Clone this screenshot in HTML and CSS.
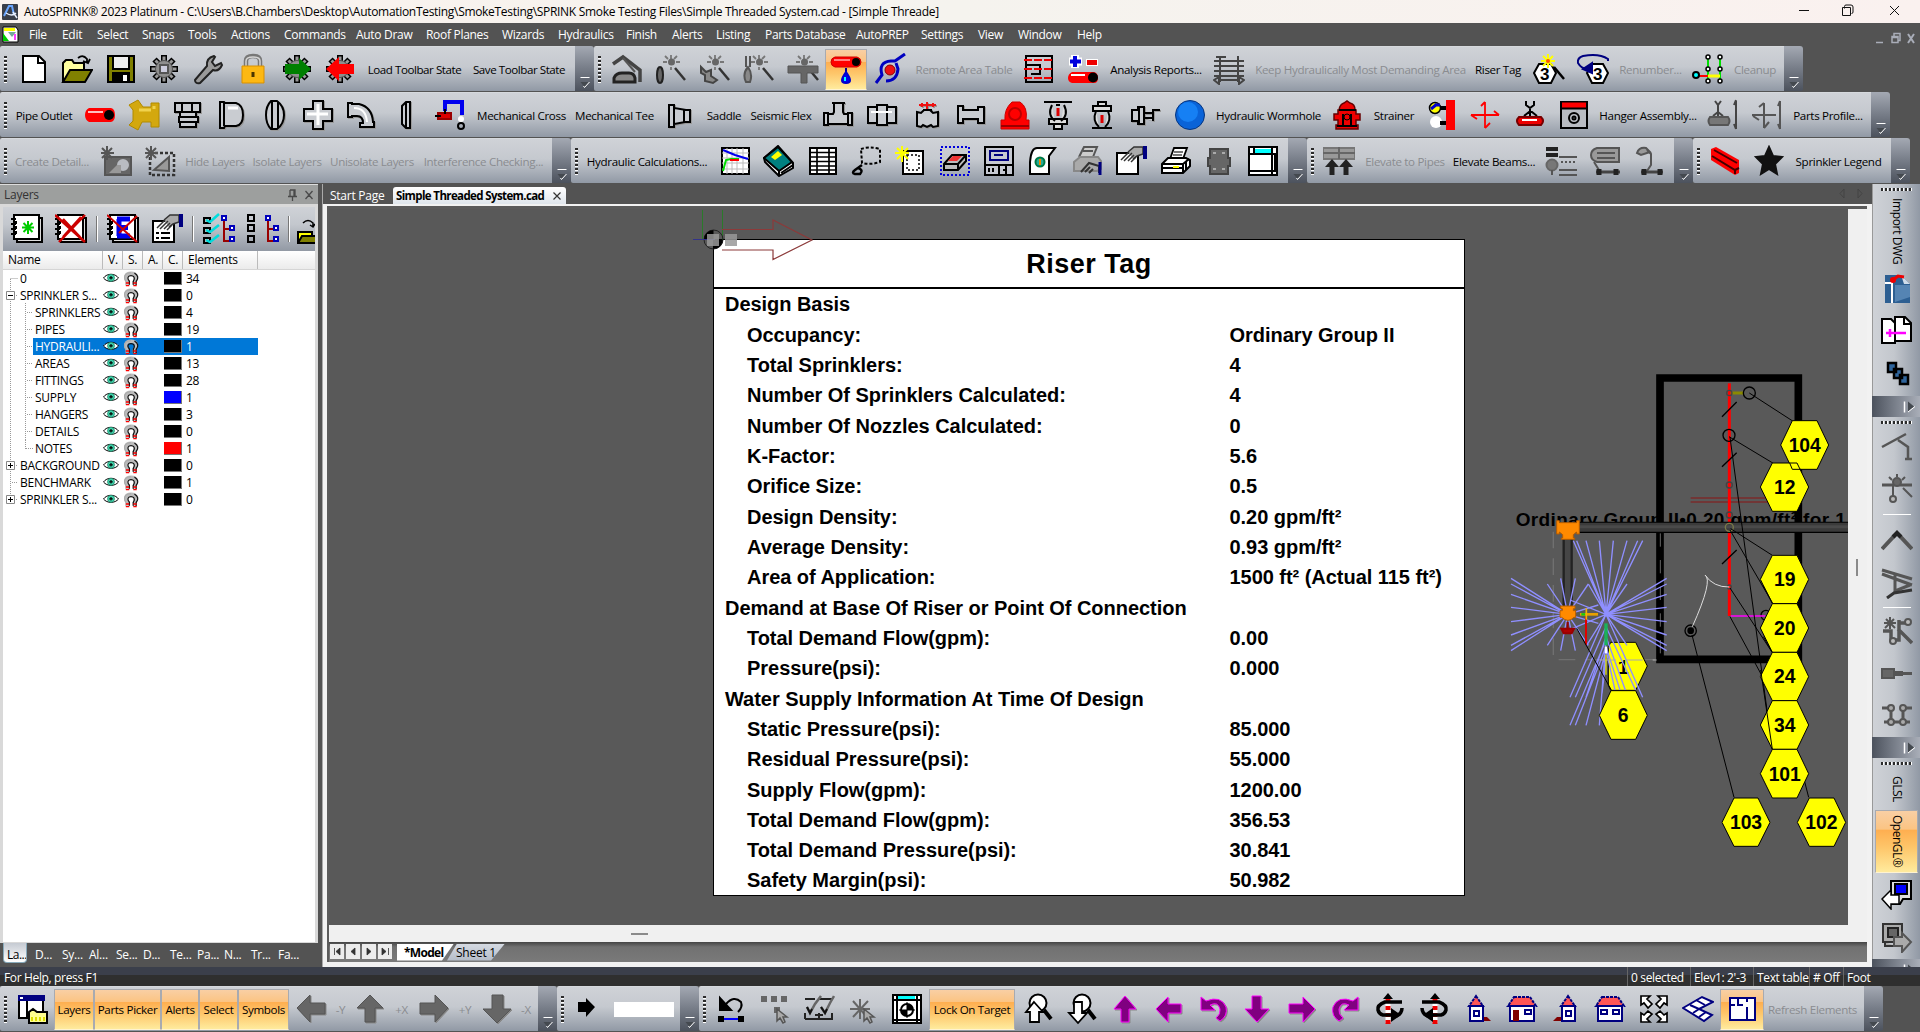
FILE: index.html
```html
<!DOCTYPE html>
<html lang="en">
<head>
<meta charset="utf-8">
<title>AutoSPRINK 2023 Platinum</title>
<link rel="stylesheet" href="styles.css">
</head>
<body>
<svg class="defs" width="0" height="0">
  <symbol id="eye" viewBox="0 0 16 12"><path d="M0.5 6C4 1 12 1 15.500 6C12 10.500 4 10.500 .5 6Z" fill="#fff" stroke="#000"/><circle cx="8" cy="5.800" r="3.400" fill="#3fd9b0" stroke="#2a9a7a"/><path d="M8 4v3.600M6.200 5.800h3.600" stroke="#000" stroke-width="1.200"/></symbol>
  <symbol id="magnet" viewBox="0 0 14 14"><path d="M4.200 12V9.500C1 6 2 2 7 2s6 4 2.800 7.500V12" fill="none" stroke="#bbb" stroke-width="3"/><path d="M2.600 12.500V9.200C-.2 5 2 1.500 7 1.500" fill="none" stroke="#aaa"/><path d="M5.600 12V9C3 6 4.500 4 7 4s4 2 2 5v3M10 1.800q5 3 1.500 7.400v3" fill="none" stroke="#111" stroke-width="1.100"/><path d="M2.500 10.500h3M9 10.500h3M2.500 12.800h3M9 12.800h3" stroke="#f00" stroke-width="1.200"/></symbol>
  <symbol id="cap" viewBox="0 0 18 45"><path d="M5 31.500h9" stroke="#fff"/><path d="M5 36h8l-4 5z" fill="#44494f"/><path d="M14 36l-5 5.500l-1-1.500" fill="none" stroke="#fff"/></symbol>
  <symbol id="cap-side" viewBox="0 0 48 20"><path d="M32.500 5v11" stroke="#fff" stroke-width="1.500"/><path d="M36 5v10l6-5z" fill="#44494f"/><path d="M36 15.500l7-5.500" stroke="#fff"/></symbol>
  <symbol id="gear" viewBox="0 0 32 32"><g stroke="#000" stroke-width="6"><path d="M16 2v28M2 16h28M6.500 6.500l19 19M25.500 6.500l-19 19"/></g><g stroke="#999" stroke-width="3"><path d="M16 3.500v25M3.500 16h25M7.500 7.500l17 17M24.500 7.500l-17 17"/></g><circle cx="16" cy="16" r="8.500" fill="#8e8e8e" stroke="#555" stroke-width="1"/></symbol>
  <symbol id="wand" viewBox="0 0 32 32"><path d="M17 2v4M17 14v3M9 9h4M22 9h4M11 3l3 3M23 3l-3 3" stroke="#777" stroke-width="1.800"/><circle cx="17.500" cy="9" r="3.500" fill="#666" stroke="none"/><path d="M21 15l10 12" stroke="#333" stroke-width="2.500"/></symbol>
  <symbol id="book" viewBox="0 0 32 32"><path d="M6 5h25v24H6z" fill="#ddd" stroke="#000" stroke-width="2"/><path d="M3 2h25v24H3z" fill="#fff" stroke="#000" stroke-width="2"/><path d="M0 6h5M0 11h5M0 16h5M0 21h5M5 8v3M5 13v3M5 18v3" stroke="#000" stroke-width="2"/></symbol>
  <symbol id="printer" viewBox="0 0 32 32"><path d="M11 14l4-11h13l-4 11" fill="#fff" stroke="#000" stroke-width="1.800"/><path d="M15 7h9M14 10h9" stroke="#777"/><path d="M3 19l6-6h18l4 2v6l-7 7H3z" fill="#fff" stroke="#000" stroke-width="2"/><path d="M3 19h21l6-5M3 23h21M24 19v8M27 17v8" stroke="#000" stroke-width="2" fill="none"/><path d="M14 22h6" stroke="#ff0" stroke-width="2"/></symbol>
  <symbol id="hand" viewBox="0 0 32 32"><path d="M2 8h12v-1h9v22H2z" fill="#fff" stroke="#000" stroke-width="2"/><path d="M13 7l6-5h9v7l-6 2l-4 3" fill="#aaa" stroke="#333" stroke-width="1.500"/><path d="M6 15l8-8M9 16l8-8M13 16l6-6M16 17l5-5" stroke="#333" stroke-width="1.500" fill="none"/><path d="M30 1v13" stroke="#000080" stroke-width="4"/></symbol>
  <symbol id="pointer" viewBox="0 0 32 32"><path d="M18 16v12l3-3l3 5l2-1l-2-5h4z" fill="#aaa" stroke="#555" stroke-width="1.500"/></symbol>
</svg>

<header class="titlebar">
  <svg class="app" viewBox="0 0 16 16"><rect width="16" height="16" rx="1" fill="#3a3f4a"/><path d="M2 12L7 2h3l2 9" fill="none" stroke="#69a5ff" stroke-width="2"/><path d="M4 9q6 4 10 0M11 8l4 6" stroke="#e8f0ff" stroke-width="1.500" fill="none"/></svg>
  <span class="title">AutoSPRINK® 2023 Platinum - C:\Users\B.Chambers\Desktop\AutomationTesting\SmokeTesting\SPRINK Smoke Testing Files\Simple Threaded System.cad - [Simple Threade]</span>
  <svg class="winctl" viewBox="0 0 110 23"><path d="M5 10.500h10M50.500 8.500v-2q0-1.500 1.500-1.500h5q2 0 2 2v5q0 1.500-1.500 1.500M48.500 7.500h8v8h-8zM96 6l9 9M105 6l-9 9" fill="none" stroke="#111"/></svg>
</header>
<nav class="menubar">
  <svg class="docicon" viewBox="0 0 17 17"><path d="M1 1h13l2 3v12H1z" fill="#fff" stroke="#000"/><path d="M2 2h11v3H2z" fill="#ff0"/><path d="M1 7l6 8H1z" fill="#0c0"/><path d="M6 6h8l-4 5z" fill="#7a9"/><path d="M13 8v6" stroke="#f0f" stroke-width="1.500"/></svg>
  <span>File</span><span>Edit</span><span>Select</span><span>Snaps</span><span>Tools</span><span>Actions</span><span>Commands</span><span>Auto Draw</span><span>Roof Planes</span><span>Wizards</span><span>Hydraulics</span><span>Finish</span><span>Alerts</span><span>Listing</span><span>Parts Database</span><span>AutoPREP</span><span>Settings</span><span>View</span><span>Window</span><span>Help</span>
  <svg class="mdi" viewBox="0 0 42 16"><path d="M1 12.500h7M19 6V3.500h6v7h-2M17 6.500h6v6h-6zM17 7.500h6" fill="none" stroke="#a9adb8" stroke-width="1.500"/><path d="M33 4l6 9M39 4l-6 9" stroke="#a9adb8" stroke-width="2"/></svg>
</nav>

<div class="toolrow">
  <div class="tb r1a"><i class="grip"></i>
    <svg class="i" viewBox="0 0 32 32"><path d="M5 3h16l6 6v20H5z" fill="#fff"/><path d="M20 3v7h7"/></svg>
    <svg class="i" viewBox="0 0 32 32"><path d="M2 29V10l3-3h6l2 3h10v6" fill="#ffffa0"/><path d="M2 29l7-12h22l-7 12z" fill="#808000"/><path d="M17 5q5-4 9 1v4M22 8l5 2l2-4" stroke-width="1.800"/></svg>
    <svg class="i" viewBox="0 0 32 32"><path d="M3 3h26v26H3z" fill="#808000"/><path d="M8 3h16v13H8z" fill="#eee"/><path d="M8 20h16v9H8z" fill="#000"/><path d="M18 22h4v6h-4z" fill="#fff" stroke="none"/></svg>
    <svg class="i" viewBox="0 0 32 32"><use href="#gear"/><path d="M12 12h8v8h-8z" fill="#ccd" stroke="#555"/></svg>
    <svg class="i" viewBox="0 0 32 32"><path d="M3 27l12-14q-1-8 7-10l1 1l-3 5l3 4l6-3l1 2q-3 7-9 5L8 30q-5 1-5-3z" fill="#9a9a9a" stroke="#222"/></svg>
    <svg class="i" viewBox="0 0 32 32"><path d="M9 14V8q0-5 7-5t7 5v6" stroke="#777" stroke-width="4.500"/><path d="M9 13V8q0-4 7-4t7 4v5" stroke="#d5d5d5" stroke-width="1.500"/><path d="M5 13h22v17H5z" fill="#fdb813" stroke="#d99000" stroke-width="1"/><path d="M16 19v5" stroke="#4a3500" stroke-width="3"/></svg>
    <svg class="i" viewBox="0 0 32 32"><use href="#gear"/><path d="M4 11h14V5l12 11l-12 11v-6H4z" fill="#008000" stroke="none"/></svg>
    <svg class="i" viewBox="0 0 32 32"><use href="#gear"/><path d="M30 11H15V4L2 16l13 12v-7h15z" fill="#f00" stroke="none"/></svg>
    <b>Load Toolbar State</b><b>Save Toolbar State</b>
  </div>
  <svg class="cap"><use href="#cap"/></svg>
  <div class="tb r1b"><i class="grip"></i>
    <svg class="i g" viewBox="0 0 32 32"><path d="M2 11L12 4l17 13v12" stroke-width="3.500" stroke="#444"/><path d="M3 29v-4q2-5 8-5h7q5 0 6 5v4z" fill="#888" stroke="#222" stroke-width="3"/><path d="M12 5l12 14"/></svg>
    <svg class="i g" viewBox="0 0 32 32"><use href="#wand"/><ellipse cx="6" cy="22" rx="3" ry="8" fill="#666" stroke="#222"/></svg>
    <svg class="i g" viewBox="0 0 32 32"><use href="#wand"/><path d="M3 14v6l4 2v6l8 2l4-3l-6-4v-6l-5 2z" fill="#888" stroke="#444"/></svg>
    <svg class="i g" viewBox="0 0 32 32"><use href="#wand"/><path d="M4 3v11M8 3v11"/><path d="M6 14q5 7 2 15H4q-4-8 2-15z" fill="#888"/></svg>
    <svg class="i g" viewBox="0 0 32 32"><use href="#wand"/><path d="M1 13h30v7H20v10h-6V20H1z" fill="#666" stroke="#555" stroke-width="1"/></svg>
    <span class="hot"><svg class="i" viewBox="0 0 32 32"><path d="M5 4h22q4 1 4 5t-4 5H5q-4-1-4-5t4-5z" fill="#f00" stroke="#c00" stroke-width="1"/><circle cx="26" cy="9" r="4" fill="#000" stroke="none"/><path d="M4 7h16" stroke="#fff" stroke-width="1"/><path d="M16 15v7" stroke="#000090"/><path d="M16 19q-8 11 0 11t0-11z" fill="#00e" stroke="#00c"/><path d="M15 24v4" stroke="#0ff"/></svg></span>
    <svg class="i" viewBox="0 0 32 32"><path d="M2 30l6-8q-4-13 9-14h4l10-7M12 28q11 0 12-12l-2-6" stroke="#0000c0" stroke-width="3"/><circle cx="16" cy="17" r="5" fill="#e11" stroke="#800" stroke-width="1"/></svg>
    <b class="off">Remote Area Table</b>
    <svg class="i" viewBox="0 0 32 32"><path d="M3 3h26v26H3zM3 12h14v9h-9"/><path d="M1 7h30M1 16h30M1 25h30" stroke="#e00" stroke-dasharray="8 2"/></svg>
    <svg class="i" viewBox="0 0 32 32"><path d="M8 2v13M2 8.500h13" stroke="#fff" stroke-width="8"/><path d="M8 3v11M3 8.500h11" stroke="#00d" stroke-width="4"/><path d="M19 9.500h12" stroke="#fff" stroke-width="7"/><path d="M20 9.500h10" stroke="#e00" stroke-width="5"/><path d="M5 19h22q4 1 4 6t-4 5H5q-4-1-4-5t4-6z" fill="#f00" stroke="none"/><circle cx="26" cy="24.500" r="5" fill="#000" stroke="none"/><path d="M4 22h14" stroke="#fff"/></svg>
    <b>Analysis Reports...</b>
    <svg class="i g" viewBox="0 0 32 32"><path d="M1 8h30M1 13h30M1 18h30M7 3v26M25 3v26M3 4h10M5 27h22M1 23h30M31 27l-5-3v7zM1 27l5-3v7z" stroke="#444" stroke-width="2"/></svg>
    <b class="off">Keep Hydraulically Most Demanding Area</b><b>Riser Tag</b>
    <svg class="i" viewBox="0 0 32 32"><path d="M6 11h12l5 9l-5 10H6l-5-10z" fill="#fff"/><text x="7" y="27" class="n3">3</text><path d="M15 1v14M8 8h14M10 3l10 10M20 3L10 13" stroke="#ff0"/><circle cx="15" cy="8" r="2" fill="#f50" stroke="none"/><path d="M21 14l10 12" stroke-width="2.500"/></svg>
    <svg class="i" viewBox="0 0 32 32"><path d="M15 11h11l5 9l-5 10H15l-5-10z" fill="#fff"/><text x="16" y="27" class="n3">3</text><path d="M31 8V6Q22 0 6 3Q0 5 1 10q3 5 8 6h4" stroke="#000080"/><path d="M15 10v10L6 16z" fill="#000080" stroke="#000080"/></svg>
    <b class="off">Renumber...</b>
    <svg class="i" viewBox="0 0 32 32"><path d="M16 6v22M28 6v22" stroke="#0d0"/><path d="M5 23h11" stroke="#f00"/><path d="M16 23h12" stroke="#ff0" stroke-width="3"/><circle cx="4" cy="22" r="3" fill="#0ff"/><g fill="#fff" stroke-width="1.500"><circle cx="16" cy="4" r="2"/><circle cx="28" cy="4" r="2"/><circle cx="16" cy="16" r="2"/><circle cx="28" cy="16" r="2"/><circle cx="16" cy="28" r="2"/><circle cx="28" cy="28" r="2"/></g></svg>
    <b class="off">Cleanup</b>
  </div>
  <svg class="cap"><use href="#cap"/></svg>
</div>

<div class="toolrow">
  <div class="tb r2"><i class="grip"></i>
    <b>Pipe Outlet</b>
    <svg class="i" viewBox="0 0 32 32"><path d="M5 9h22q4 1 4 7t-4 7H5q-4-2-4-7t4-7z" fill="#f00" stroke="none"/><circle cx="25" cy="16" r="5" fill="#000" stroke="none"/><path d="M4 13h15" stroke="#fff" stroke-width="1.500"/></svg>
    <svg class="i" viewBox="0 0 32 32"><path d="M1 6l9-5l5 7h8V4h8v24h-8v-5h-9l-4 8l-9-5l4-4v-11z" fill="#d3a80e" stroke="#b08a00" stroke-width="1"/><path d="M11 11h12M26 7v3" stroke="#f0d24e" stroke-width="3"/></svg>
    <svg class="i m" viewBox="0 0 32 32"><path d="M3 4h25v9H3zM10 4v9M20 4v9M8 13h16v5H8zM7 18h19v5H7zM8 23h16v5H8z"/></svg>
    <svg class="i m" viewBox="0 0 32 32"><path d="M5 3h4l1 1h11q7 2 7 12t-7 11H10l-1 2H5zM9 4v23"/><path d="M13 9h10" stroke="#fff" stroke-width="3"/></svg>
    <svg class="i m" viewBox="0 0 32 32"><path d="M12 2h6q7 5 7 14t-7 14h-6q-5-5-5-14t5-14zM13 3v26M19 3v26"/></svg>
    <svg class="i m" viewBox="0 0 32 32"><path d="M11 2h10v8h9v12h-9v8H11v-8H2V10h9z"/><path d="M16 5v21M5 15h21" stroke="#fff" stroke-width="3"/></svg>
    <svg class="i m" viewBox="0 0 32 32"><path d="M2 4h4v1h7q13 3 14 18h1v5H14v-4h3q0-7-6-7H6v1H2z"/><path d="M8 9q12 0 13 14" stroke="#fff"/></svg>
    <svg class="i m" viewBox="0 0 32 32"><path d="M16 3h4v26h-4l-4-4V7z"/><path d="M16 3v26"/></svg>
    <svg class="i" viewBox="0 0 32 32"><path d="M11 12V3h17v13" stroke="#00e" stroke-width="4"/><path d="M4 14h13v6H4z" fill="#d00" stroke="#900"/><path d="M1 17h6M11 10v5"/><circle cx="27" cy="20" r="3" fill="#fff" stroke="none"/><circle cx="27" cy="27" r="3"/></svg>
    <b>Mechanical Cross</b><b>Mechanical Tee</b>
    <svg class="i m" viewBox="0 0 32 32"><path d="M5 6h5v3l12 2h4v12h-5l-11 2v3H5zM10 9v16M20 11v12"/></svg>
    <b>Saddle</b><b>Seismic Flex</b>
    <svg class="i m" viewBox="0 0 32 32"><path d="M12 4h9v9l1 2h4v-1h4v12h-4v-1H6v1H2V14h4v1h5l1-2zM6 15v10M26 15v10M10 4h13"/></svg>
    <svg class="i m" viewBox="0 0 32 32"><path d="M2 8h9v16H2zM21 8h9v16h-9zM11 6h10v20H11z"/><path d="M5 13h21" stroke="#fff"/></svg>
    <svg class="i m" viewBox="0 0 32 32"><path d="M6 13l4 1l3-3h6l3 3l5-1v14l-5 1l-2-2l-4 2l-4-2l-2 2l-4-1zM12 11h9"/><path d="M8 6h17M16 3v7M11 4v4M22 4v4" stroke="#e11"/></svg>
    <svg class="i m" viewBox="0 0 32 32"><path d="M3 7h5v4h15V8h6v16h-6v-4H8v4H3z"/></svg>
    <svg class="i" viewBox="0 0 32 32"><path d="M13 3h8q8 5 6 18h3v9H2v-9h4Q5 10 13 3z" fill="#f00" stroke="#c00" stroke-width="1"/><circle cx="16" cy="15" r="6" stroke="#b00"/><path d="M2 27h28" stroke="#900"/></svg>
    <svg class="i" viewBox="0 0 32 32"><path d="M2 3h28M10 6q-5 10 3 16M22 6q5 10-3 16M14 6h4M7 20h18v5H7zM12 25h8v5h-8z" fill="#ddd"/><path d="M16 9v8" stroke="#d00" stroke-width="3"/></svg>
    <svg class="i" viewBox="0 0 32 32"><path d="M6 29h20M12 3h8v4h-8zM7 7h18v5H7zM10 12q-4 10 3 16M22 12q4 10-3 16" fill="#ddd"/><path d="M16 16v8" stroke="#d00" stroke-width="3"/></svg>
    <svg class="i m" viewBox="0 0 32 32"><path d="M2 11h6V8h6v17H8v-3H2zM9 8v17M14 14h9v-3h7M14 19h9v3M23 11v11"/></svg>
    <svg class="i" viewBox="0 0 32 32"><circle cx="16" cy="16" r="14.500" fill="#0a63d8" stroke="#06357f" stroke-width="1"/><circle cx="14" cy="13" r="10" fill="#1680f4" stroke="none"/></svg>
    <b>Hydraulic Wormhole</b>
    <svg class="i" viewBox="0 0 32 32"><path d="M8 11q1-6 5-7l3-2l3 2q5 1 5 7h1v4h4v6h-4v5h2v4H5v-4h2v-5H3v-6h4v-4z" fill="#e00" stroke="#600" stroke-width="1.500"/><path d="M8 11h17M12 15v12M20 15v12M6 27h20"/><circle cx="16" cy="18" r="3" stroke-width="1"/></svg>
    <b>Strainer</b>
    <svg class="i" viewBox="0 0 32 32"><path d="M20 1h9v30h-9z" fill="#f00" stroke="none"/><circle cx="9" cy="9" r="5.500" fill="#ff0" stroke-width="1.500"/><path d="M5 10l6-5M10 6h4" stroke="#00c" stroke-width="3"/><circle cx="10" cy="23" r="6" fill="#fff" stroke="none"/><path d="M14 9h6M14 24h6" stroke-width="4"/></svg>
    <svg class="i" viewBox="0 0 32 32"><path d="M2 16h28M16 3v26M12 7l4-4M30 16l-5-4M2 16l6 4M16 29l5-5" stroke="#f00" stroke-width="1.800"/></svg>
    <svg class="i" viewBox="0 0 32 32"><path d="M12 2v4l4 3l4-3V2M16 9v9M10 17l5-4h3l5 4"/><path d="M5 18h22q4 4 0 8H5q-4-4 0-8z" fill="#e00" stroke="#700"/><path d="M8 21h15" stroke="#fff"/></svg>
    <svg class="i" viewBox="0 0 32 32"><path d="M3 3h26v26H3z" fill="#b9bcc2"/><path d="M4 3.500h24v6H4z" fill="#f00" stroke="none"/><path d="M3 9.500h26"/><circle cx="16" cy="19" r="5"/><circle cx="16" cy="19" r="1.500"/></svg>
    <b>Hanger Assembly...</b>
    <svg class="i g" viewBox="0 0 32 32"><path d="M8 2l3 4l3-4M11 6v12M29 2v28M29 1l-2 5M29 30l-2-5M6 17l5-4l5 4" stroke="#444"/><path d="M3 18h18q3 4 0 8H3q-3-4 0-8z" fill="#777"/></svg>
    <svg class="i g" viewBox="0 0 32 32"><path d="M1 16h24M13 4v25M8 8l5-4M2 17l6 4M13 29l5-6M29 2v28M29 2l-2 5M29 30l-2-5"/></svg>
    <b>Parts Profile...</b>
  </div>
  <svg class="cap"><use href="#cap"/></svg>
</div>

<div class="toolrow">
  <div class="tb r3a"><i class="grip"></i>
    <b class="off">Create Detail...</b>
    <svg class="i g" viewBox="0 0 32 32"><path d="M5 12h26v18H5z" fill="#666"/><path d="M7 1v14M1 8h13M2 3l10 10M12 3L2 13" stroke="#555"/><circle cx="23" cy="20" r="5" fill="#b9bcc2" stroke="#b9bcc2"/><path d="M9 28l8-8h4v8z" fill="#999" stroke="none"/></svg>
    <svg class="i g" viewBox="0 0 32 32"><path d="M6 8h24v22H6z" stroke-dasharray="3 2" stroke="#333" stroke-width="2.500"/><path d="M7 1v14M1 8h13M2 3l10 10M12 3L2 13" stroke="#555"/><path d="M10 25l15-13v14z" fill="#999"/></svg>
    <b class="off">Hide Layers</b><b class="off">Isolate Layers</b><b class="off">Unisolate Layers</b><b class="off">Interference Checking...</b>
  </div>
  <svg class="cap"><use href="#cap"/></svg>
  <div class="tb r3b"><i class="grip"></i>
    <b>Hydraulic Calculations...</b>
    <svg class="i" viewBox="0 0 32 32"><path d="M3 3h27v26H3z" fill="#fff"/><path d="M8 3v26M13 3v26M18 3v26M24 3v26M3 8h27M3 13h27M3 18h27M3 24h27" stroke="#bbb" stroke-width="1"/><path d="M4 5l12 5l13 4" stroke="#00e"/><path d="M4 26l3-11l5-1h8" stroke="#0d0"/><path d="M11 15h9" stroke="#f00"/></svg>
    <svg class="i" viewBox="0 0 32 32"><path d="M1 13L15 1l15 17v5L16 31L2 17z" fill="#fff"/><path d="M1 13L15 2l14 15l-13 9z" fill="#008080"/><path d="M8 12l7-6l4 4l-7 5z" fill="#ff0" stroke="none"/><path d="M16 26v5M18 28l12-8"/></svg>
    <svg class="i" viewBox="0 0 32 32"><path d="M3 3h26v26H3z" fill="#fff"/><path d="M3 7.500h26M3 12h26M3 16.500h26M3 21h26M3 25h26M10 3v26M22 3v26" stroke-width="1.700"/></svg>
    <svg class="i" viewBox="0 0 32 32"><path d="M10 4q8-3 19 0v13q-9 3-18 1z" stroke-dasharray="3 2"/><path d="M11 20l-7 5q-4 3 0 4h5q4-4-2-6" stroke-width="2.500"/></svg>
    <svg class="i" viewBox="0 0 32 32"><path d="M8 6h20v23H8z" fill="#fff"/><path d="M12 10h12v15H12z" stroke-dasharray="2 2" stroke-width="1.500"/><path d="M7 1v16M0 8h14M2 3l11 11M13 3L2 14" stroke="#ff0"/></svg>
    <svg class="i" viewBox="0 0 32 32"><path d="M2 2h28v28H2z" stroke="#00d" stroke-dasharray="2 2"/><path d="M5 19l8-9h14v6l-8 9H5zM5 19h14v6M19 19l8-9" fill="#bbb"/><path d="M9 16l5-5h9l-5 5z" fill="#e33" stroke="none"/></svg>
    <svg class="i" viewBox="0 0 32 32"><path d="M2 2h28v28H2zM2 20h28M16 20v10M23 20v10" fill="#c6c9d2"/><path d="M7 6h18v9H7zM11 10h9" stroke="#000080"/><path d="M6 23v4M10 23v4M20 25h2"/></svg>
    <svg class="i" viewBox="0 0 32 32"><path d="M4 29V17q1-14 7-14h18l-6 8v18z" fill="#fff"/><circle cx="14" cy="17" r="4.500" fill="#2a9" stroke="#074"/><path d="M14 14v6" stroke="#e80"/></svg>
    <svg class="i g" viewBox="0 0 32 32"><path d="M8 12l5-10h13l-4 10M12 6h10" fill="#ccc"/><path d="M3 17l6-5h18l3 4v8l-4 2H3z" fill="#aaa" stroke="#888"/><path d="M10 27l8-9l10 3v7M14 27l5-5M18 28l4-4" stroke="#333"/><path d="M29 17v13" stroke="#000080" stroke-width="3"/></svg>
    <svg class="i" viewBox="0 0 32 32"><use href="#hand"/></svg>
    <svg class="i" viewBox="0 0 32 32"><use href="#printer"/></svg>
    <svg class="i g" viewBox="0 0 32 32"><path d="M6 4h18v9h2v8h-2v8H6v-8H4v-8h2z" fill="#666" stroke="#444"/><path d="M9 8h3M18 8h3M9 24h3M18 24h3" stroke="#aaa"/></svg>
    <svg class="i" viewBox="0 0 32 32"><path d="M2 2h28v28H2z" fill="#fff"/><path d="M8 4h16v4H8z" fill="#0ff" stroke="none"/><path d="M2 9h28M2 26h28M7 2v7M25 2v28M28 9v17"/></svg>
  </div>
  <svg class="cap"><use href="#cap"/></svg>
  <div class="tb r3c"><i class="grip"></i>
    <svg class="i g" viewBox="0 0 32 32"><path d="M0 3h32v11H0z" fill="#999" stroke="#777"/><path d="M0 8h32M16 2v12" stroke="#666"/><path d="M9 30V19M23 30V19" stroke="#222" stroke-width="5"/><path d="M2 22l7-8l7 8zM16 22l7-8l7 8z" fill="#222" stroke="none"/></svg>
    <b class="off">Elevate to Pipes</b><b>Elevate Beams...</b>
    <svg class="i g" viewBox="0 0 32 32"><path d="M1 4h12M1 10h12" stroke="#222" stroke-width="4"/><circle cx="7" cy="20" r="5.500" fill="#777" stroke="#666"/><path d="M7 25v5M14 12h18M14 25h18M14 30h18" stroke="#555"/><path d="M16 17h15" stroke-dasharray="2 2"/></svg>
    <svg class="i g" viewBox="0 0 32 32"><path d="M7 3h22v14H7q-6-2-6-7t6-7z" fill="#999"/><path d="M7 8h18M7 13h18M4 17l5 8"/><path d="M6 27h24" stroke="#444" stroke-width="3"/><path d="M9 24v6M26 24v6" stroke="#222" stroke-width="5"/></svg>
    <svg class="i g" viewBox="0 0 32 32"><path d="M2 8q2-6 9-5l4 4l-9 3z" fill="#999"/><path d="M12 5l4 4v11l-4 6" stroke="#555"/><path d="M6 27h22" stroke="#444" stroke-width="3"/><path d="M9 24v6M25 24v6" stroke="#222" stroke-width="5"/></svg>
  </div>
  <svg class="cap"><use href="#cap"/></svg>
  <div class="tb r3d"><i class="grip"></i>
    <svg class="i" viewBox="0 0 32 32"><path d="M2 4l5-2l23 13v13l-4 2L2 15z" fill="#f00" stroke="none"/><path d="M3 11l23 14l4-2M26 25v4M5 5l23 13" stroke="#400" stroke-width="2"/></svg>
    <svg class="i" viewBox="0 0 32 32"><path d="M16 2l4 9l9 1l-7 7l2 10l-8-5l-8 5l2-10l-7-7l9-1z" fill="#111" stroke="#111"/></svg>
    <b>Sprinkler Legend</b>
  </div>
  <svg class="cap"><use href="#cap"/></svg>
</div>

<main class="work">
  <aside class="layers">
    <div class="ltitle"><span>Layers</span><svg viewBox="0 0 36 14"><path d="M8 2h5v6M8 2v6M6 8.500h9M10.500 9v4M12 2v6M23.500 3l7 8M30.500 3l-7 8" fill="none" stroke="#4a4a4a" stroke-width="1.300"/></svg></div>
    <div class="lbox">
      <div class="ltools">
        <svg class="i" viewBox="0 0 32 32"><use href="#book"/><path d="M17 8v13M11 14.500h12M12.500 10l9 9M21.500 10l-9 9" stroke="#0c0"/></svg>
        <svg class="i" viewBox="0 0 32 32"><use href="#book"/><path d="M8 6l17 18M26 4L8 24M0 2l30 27M30 2L4 29" stroke="#c00" stroke-width="2.500"/></svg>
        <i class="sep"></i>
        <svg class="i" viewBox="0 0 32 32"><use href="#book"/><path d="M10 6h13M10 14.500h11M10 23h13M12 6v17" stroke="#00e" stroke-width="5"/><path d="M0 2l30 27M30 3L12 20" stroke="#c00" stroke-width="2"/></svg>
        <svg class="i" viewBox="0 0 32 32"><use href="#hand"/><path d="M5 20h3M10 20h9M5 25h3M10 25h9"/></svg>
        <i class="sep"></i>
        <svg class="i" viewBox="0 0 32 32"><path d="M1 5h6v5H1zM1 15h6v5H1zM1 25h6v5H1z" fill="#bbb"/><path d="M3 7l4 2l9-8M3 17l4 2l9-7M3 27l4 2l9-7" stroke="#0dd" stroke-width="2.500"/><path d="M21 6v22h6M21 16h6" stroke="#900"/><path d="M19 3h4v4h-4zM27 13h4v4h-4zM27 24h4v4h-4z" fill="#fff" stroke="#00b"/></svg>
        <svg class="i" viewBox="0 0 32 32"><path d="M1 2h6v6H1zM1 12h6v6H1zM1 23h6v6H1z"/><path d="M21 6v22h6M21 16h6" stroke="#900"/><path d="M19 3h4v4h-4zM27 13h4v4h-4zM27 24h4v4h-4z" fill="#fff" stroke="#00b"/></svg>
        <i class="sep"></i>
        <svg class="i" viewBox="0 0 32 32"><path d="M6 10q5-5 10 0v4M13 12l3 2l2-3" stroke-width="1.500"/><path d="M1 30V19h14v4h5v7z" fill="#ff0"/><path d="M1 30l4-7h18v7z" fill="#808000"/></svg>
      </div>
      <div class="lgrid lhead"><span>Name</span><span>V.</span><span>S.</span><span>A.</span><span>C.</span><span>Elements</span><span></span></div>
      <div class="lbody">
        <svg class="tree" viewBox="0 0 36 240"><path d="M10.500 9v222M25.500 33v137M10.500 8.500h7M12 25.500h5M27 42.500h6M27 59.500h6M27 76.500h6M27 93.500h6M27 110.500h6M27 127.500h6M27 144.500h6M27 161.500h6M26 178.500h7M12 195.500h5M12 212.500h5M12 229.500h5M25.500 170v9" fill="none" stroke="#999" stroke-dasharray="1 1"/><g fill="#fff" stroke="#888"><path d="M6.500 21.500h8v8h-8zM6.500 191.500h8v8h-8zM6.500 225.500h8v8h-8z"/><path d="M8 25.500h5M8 195.500h5M10.500 193v5M8 229.500h5M10.500 227v5" stroke="#000"/></g></svg>
        <div class="lgrid"><span class="l0">0</span><svg class="e"><use href="#eye"/></svg><svg class="mg"><use href="#magnet"/></svg><i></i><i class="sw"></i><span>34</span></div>
        <div class="lgrid"><span class="l0">SPRINKLER S...</span><svg class="e"><use href="#eye"/></svg><svg class="mg"><use href="#magnet"/></svg><i></i><i class="sw"></i><span>0</span></div>
        <div class="lgrid"><span class="l1">SPRINKLERS</span><svg class="e"><use href="#eye"/></svg><svg class="mg"><use href="#magnet"/></svg><i></i><i class="sw"></i><span>4</span></div>
        <div class="lgrid"><span class="l1">PIPES</span><svg class="e"><use href="#eye"/></svg><svg class="mg"><use href="#magnet"/></svg><i></i><i class="sw"></i><span>19</span></div>
        <div class="lgrid sel"><span class="l1">HYDRAULI...</span><svg class="e"><use href="#eye"/></svg><svg class="mg"><use href="#magnet"/></svg><i></i><i class="sw"></i><span>1</span></div>
        <div class="lgrid"><span class="l1">AREAS</span><svg class="e"><use href="#eye"/></svg><svg class="mg"><use href="#magnet"/></svg><i></i><i class="sw"></i><span>13</span></div>
        <div class="lgrid"><span class="l1">FITTINGS</span><svg class="e"><use href="#eye"/></svg><svg class="mg"><use href="#magnet"/></svg><i></i><i class="sw"></i><span>28</span></div>
        <div class="lgrid"><span class="l1">SUPPLY</span><svg class="e"><use href="#eye"/></svg><svg class="mg"><use href="#magnet"/></svg><i></i><i class="sw blue"></i><span>1</span></div>
        <div class="lgrid"><span class="l1">HANGERS</span><svg class="e"><use href="#eye"/></svg><svg class="mg"><use href="#magnet"/></svg><i></i><i class="sw"></i><span>3</span></div>
        <div class="lgrid"><span class="l1">DETAILS</span><svg class="e"><use href="#eye"/></svg><svg class="mg"><use href="#magnet"/></svg><i></i><i class="sw"></i><span>0</span></div>
        <div class="lgrid"><span class="l1">NOTES</span><svg class="e"><use href="#eye"/></svg><svg class="mg"><use href="#magnet"/></svg><i></i><i class="sw red"></i><span>1</span></div>
        <div class="lgrid"><span class="l0">BACKGROUND</span><svg class="e"><use href="#eye"/></svg><svg class="mg"><use href="#magnet"/></svg><i></i><i class="sw"></i><span>0</span></div>
        <div class="lgrid"><span class="l0">BENCHMARK</span><svg class="e"><use href="#eye"/></svg><svg class="mg"><use href="#magnet"/></svg><i></i><i class="sw"></i><span>1</span></div>
        <div class="lgrid"><span class="l0">SPRINKLER S...</span><svg class="e"><use href="#eye"/></svg><svg class="mg"><use href="#magnet"/></svg><i></i><i class="sw"></i><span>0</span></div>
      </div>
    </div>
    <div class="ltabs"><span class="on">La...</span><span>D...</span><span>Sy...</span><span>Al...</span><span>Se...</span><span>D...</span><span>Te...</span><span>Pa...</span><span>N...</span><span>Tr...</span><span>Fa...</span></div>
  </aside>

  <section class="doc">
    <div class="dtabs"><span class="start">Start Page</span><span class="active">Simple Threaded System.cad<svg viewBox="0 0 8 8"><path d="M.5.5l7 7M7.500.5l-7 7" stroke="#333" stroke-width="1.200"/></svg></span><svg class="dnav" viewBox="0 0 26 12"><path d="M6 1v9L2 5.500zM20 1v9l4-4.500z" fill="none" stroke="#444"/></svg></div>
    <div class="frame">
      <div class="view">
        <div class="canvas">
          <table class="riser">
            <caption>Riser Tag</caption>
            <colgroup><col class="c1"><col></colgroup>
            <tr><th colspan="2">Design Basis</th></tr>
            <tr><td>Occupancy:</td><td>Ordinary Group II</td></tr>
            <tr><td>Total Sprinklers:</td><td>4</td></tr>
            <tr><td>Number Of Sprinklers Calculated:</td><td>4</td></tr>
            <tr><td>Number Of Nozzles Calculated:</td><td>0</td></tr>
            <tr><td>K-Factor:</td><td>5.6</td></tr>
            <tr><td>Orifice Size:</td><td>0.5</td></tr>
            <tr><td>Design Density:</td><td>0.20 gpm/ft²</td></tr>
            <tr><td>Average Density:</td><td>0.93 gpm/ft²</td></tr>
            <tr><td>Area of Application:</td><td>1500 ft² (Actual 115 ft²)</td></tr>
            <tr><th colspan="2">Demand at Base Of Riser or Point Of Connection</th></tr>
            <tr><td>Total Demand Flow(gpm):</td><td>0.00</td></tr>
            <tr><td>Pressure(psi):</td><td>0.000</td></tr>
            <tr><th colspan="2">Water Supply Information At Time Of Design</th></tr>
            <tr><td>Static Pressure(psi):</td><td>85.000</td></tr>
            <tr><td>Residual Pressure(psi):</td><td>55.000</td></tr>
            <tr><td>Supply Flow(gpm):</td><td>1200.00</td></tr>
            <tr><td>Total Demand Flow(gpm):</td><td>356.53</td></tr>
            <tr><td>Total Demand Pressure(psi):</td><td>30.841</td></tr>
            <tr><td>Safety Margin(psi):</td><td>50.982</td></tr>
          </table>
          <svg class="origin" viewBox="690 210 130 60"><path d="M702.500 210v30M722.500 210v30" stroke="#2a7a2a"/><circle cx="713.500" cy="239.500" r="9.500" fill="none" stroke="#222"/><path d="M713.500 230v9.500h-9.500a9.500 9.500 0 0 1 9.500-9.500zM713.500 249v-9.500h9.500a9.500 9.500 0 0 1-9.500 9.500z" fill="#000"/><path d="M693 239.500h22" stroke="#33338a"/><path d="M707 234h12v12h-12zM725 234h12v12h-12z" fill="#999" opacity=".85"/><path d="M722 229.500h51v-9.500l39 20l-39 19.500v-9.500h-51" fill="none" stroke="#8c3a3a" stroke-width="1.200"/></svg>
          <svg class="plan" viewBox="0 0 1104 1500">
            <g fill="none" stroke="#000">
              <path d="M540 54H955V898H540Z" stroke-width="23"/>
              <path d="M541 520v375" stroke="#666" stroke-width="3" stroke-dasharray="40 40"/>
            </g>
            <path d="M632 414h238M632 426h238" stroke="#7a2b2b" stroke-width="5"/>
            <text class="cadtext" x="107" y="497" textLength="990">Ordinary Group II•0.20 gpm/ft² for 1</text>
            <path d="M748 70V768" stroke="#f00" stroke-width="9"/>
            <path d="M752 99h40" stroke="#8a8a00" stroke-width="9"/>
            <path d="M726 170l44-44M726 320l44-42M726 612l44-42" stroke="#000" stroke-width="4"/>
            <path d="M280 502H1104" stroke="#000" stroke-width="34"/><path d="M280 502H1104" stroke="#3b3b3b" stroke-width="27"/><path d="M280 500H1104" stroke="#4a4a4a" stroke-width="9"/>
            <path d="M263 530V745" stroke="#222" stroke-width="31"/><path d="M263 530V745" stroke="#464646" stroke-width="17"/>
            <circle cx="748" cy="502" r="12" fill="none" stroke="#7a7a4a" stroke-width="4"/>
            <g fill="none" stroke="#444" stroke-width="4"><circle cx="748" cy="99" r="8"/><circle cx="748" cy="375" r="9"/><circle cx="748" cy="465" r="9"/><circle cx="748" cy="681" r="6"/></g>
            <g fill="none" stroke="#000" stroke-width="4"><circle cx="808" cy="99" r="18"/><circle cx="747" cy="226" r="18"/><circle cx="632" cy="812" r="17"/><circle cx="858" cy="766" r="15"/></g>
            <circle cx="632" cy="812" r="10"/>
            <path d="M752 768h104" stroke="#f0f" stroke-width="5"/>
            <path d="M637 800Q700 660 675 645Q700 682 748 681" fill="none" stroke="#ddd" stroke-width="3"/>
            <path d="M220 515V899H530" fill="none" stroke="#707070" stroke-width="4" stroke-dasharray="50 30"/>
            <g class="tag"><path d="M385 862L392 847H467L502 918L467 991H392L385 976Z"/><text x="429" y="941">1</text></g>
            <path d="M385 880h45v26h-45z" fill="#ff0"/>
            <g stroke="#8f8fff" stroke-width="4" fill="none">
              <path d="M378 763L280 542M378 763L290 542M378 763L318 542M378 763L358 542M378 763L400 542M378 763L441 542M378 763L473 542M378 763L488 542M378 763L560 655M378 763L560 672M378 763L560 703M378 763L560 742M378 763L560 785M378 763L560 825M378 763L560 856M378 763L560 872M378 763L441 672M378 763L441 856M378 763L325 672M378 763L320 856M378 763L270 720M378 763L262 812"/>
              <path d="M263 763L93 655M263 763L93 672M263 763L93 703M263 763L93 742M263 763L93 785M263 763L93 825M263 763L93 856M263 763L93 872M263 763L202 672M263 763L202 856M263 763L242 655M263 763L242 872M263 763L286 655M263 763L286 872M263 763L325 672M263 763L325 856M263 763L355 735M263 763L355 790"/>
              <path d="M378 763L270 1012M378 800L286 1012M378 830L318 1012M378 840L270 1096M378 860L286 1096M378 870L318 1096M378 840L358 1096M378 763L488 1012M378 800L467 991M378 830L436 990M378 860L420 990M378 870L405 990M378 900L366 1000"/>
            </g>
            <path d="M358 900h172" stroke="#aaa" stroke-width="3" stroke-dasharray="50 30"/>
            <path d="M378 790v66" stroke="#19b35a" stroke-width="10"/><path d="M378 860v20" stroke="#fff" stroke-width="7"/><path d="M378 884v60" stroke="#dd0" stroke-width="4"/>
            <path d="M318 770v84" stroke="#e00000" stroke-width="6"/>
            <path d="M300 763h54" stroke="#e8a000" stroke-width="8"/><path d="M304 763h12" stroke="#1c1" stroke-width="7"/><path d="M319 745v34" stroke="#f5b400" stroke-width="5"/>
            <g fill="#ff8a00" stroke="#b35c00" stroke-width="3"><path d="M230 482h8v6h52v-6h8v40h-8v-6l-10 8v10h4v4h-40v-4h4v-10l-10-8v6h-8z"/><path d="M242 738h43v8h-5v6h7v20h-5q-18 18-37 0h-5v-20h7v-6h-5z"/></g>
            <path d="M244 806h38l-7 14h-24zM263 786v20" fill="#b00000" stroke="#900" stroke-width="6"/>
            <path d="M290 805L394 990M808 99L938 183M747 230L880 310M750 232L877 1168M752 506L877 586M750 510L878 730M750 684L877 878M750 770L850 955M636 825L762 1312M965 1230L986 1312" stroke="#000" stroke-width="3" fill="none"/>
            <g class="tag">
              <path d="M393 992H467L502 1066L467 1138H393L358 1066Z"/><text x="429" y="1086">6</text>
              <path d="M937 182H1011L1046 255L1011 328H937L902 255Z"/><text x="974" y="276">104</text>
              <path d="M877 309H951L986 381L951 454H877L841 381Z"/><text x="914" y="402">12</text>
              <path d="M877 586H951L986 658L951 731H877L841 658Z"/><text x="914" y="679">19</text>
              <path d="M877 731H951L986 804L951 877H877L841 804Z"/><text x="914" y="825">20</text>
              <path d="M877 877H951L986 950L951 1022H877L841 950Z"/><text x="914" y="970">24</text>
              <path d="M877 1022H951L986 1095L951 1168H877L841 1095Z"/><text x="914" y="1116">34</text>
              <path d="M877 1168H951L986 1241L951 1314H877L841 1241Z"/><text x="914" y="1262">101</text>
              <path d="M762 1314H834L870 1387L834 1459H762L726 1387Z"/><text x="798" y="1408">103</text>
              <path d="M988 1314H1062L1097 1387L1062 1459H988L952 1387Z"/><text x="1024" y="1408">102</text>
            </g>
            <path d="M929 309l8 19h26M842 930L877 1168M877 878L850 830M878 730L850 678" fill="none" stroke="#000" stroke-width="3"/>
          </svg>
        </div>
        <div class="vscroll"><i></i></div>
        <div class="hscroll"><i></i></div>
      </div>
      <div class="sheets">
        <svg viewBox="0 0 64 18"><path d="M1 1h14v15H1zM17 1h14v15H17zM33 1h14v15H33zM49 1h14v15H49z" fill="#ececec"/><path d="M5.500 5v7M11 5v7L7 8.500zM26 5v7l-4-3.500zM38 5v7l4-3.500zM53 5v7l4-3.500zM59.500 5v7" fill="#333" stroke="#333" stroke-width=".8"/></svg>
        <span class="s1">*Model</span><span class="s2">Sheet 1</span>
      </div>
    </div>
  </section>

  <aside class="side">
    <div class="sb sb1"><i class="hgrip"></i><b class="vt">Import DWG</b>
      <svg class="i" viewBox="0 0 32 32"><path d="M4 2h16l9 9v19H4z" fill="#2d5f92" stroke="none"/><path d="M14 12h15v12L14 29z" fill="#5584b3" stroke="none"/><path d="M20 2l9 9h-6z" fill="#cfdcea" stroke="none"/><path d="M11 30V8M4 10h8" stroke="#fff"/><path d="M12 7l5-4l6 1" stroke="#e00" stroke-width="3"/><circle cx="12" cy="7" r="3" fill="#e00" stroke="none"/></svg>
      <svg class="i" viewBox="0 0 32 32"><path d="M1 4h9l4 4v20H1zM14 2h10l6 6v18H14z" fill="#fff"/><path d="M5 18h20M9 14v8" stroke="#f0f" stroke-width="2.500"/><path d="M23 2v7h7"/></svg>
      <svg class="i" viewBox="0 0 32 32"><path d="M7 5h8v9H7zM13 11h8v9h-8zM19 17h8v9h-8z" fill="#2f659c" stroke-width="2.500"/></svg>
    </div>
    <svg class="scap"><use href="#cap-side"/></svg>
    <div class="sb sb2"><i class="hgrip"></i>
      <svg class="i g" viewBox="0 0 32 32"><path d="M1 15L25 2M17 8l10 7v12M24 27h7" stroke-width="2.500"/></svg>
      <svg class="i g" viewBox="0 0 32 32"><path d="M1 11h30" stroke-width="3"/><circle cx="16" cy="8" r="4" fill="#666"/><path d="M12 12v10M22 14l9 9M16 0v3M8 3l3 3M24 3l-3 3"/><circle cx="12" cy="25" r="3" fill="#bbb"/></svg>
      <i class="hr"></i>
      <svg class="i g" viewBox="0 0 32 32"><path d="M1 25L16 9l15 16" stroke="#555" stroke-width="4"/><path d="M12 13l4-4l4 4" stroke="#222" stroke-width="4"/></svg>
      <svg class="i g" viewBox="0 0 32 32"><path d="M1 3l30 9M1 7l30 11M14 8v16L29 18" stroke-width="3"/><path d="M6 31l7-5l18-3" stroke="#333" stroke-width="3"/></svg>
      <i class="hr"></i>
      <svg class="i g" viewBox="0 0 32 32"><path d="M9 1v12M3 7h12M5 3l9 9M13 3l-9 9"/><path d="M2 15h8v11M18 4v20h-6M18 7h7M17 13l14 14" stroke-width="3.500"/><circle cx="27" cy="6" r="3" fill="#bbb"/><circle cx="12" cy="25" r="3" fill="#bbb"/></svg>
      <svg class="i g" viewBox="0 0 32 32"><path d="M1 12h12v9H1z" fill="#666"/><path d="M13 16.500h9" stroke-width="5"/><path d="M22 16.500h9" stroke-width="3"/></svg>
      <svg class="i g" viewBox="0 0 32 32"><path d="M1 9h9v14H3M31 9h-9v14h7M10 23h12" stroke-width="3"/><g fill="#aaa"><circle cx="10" cy="9" r="3"/><circle cx="22" cy="9" r="3"/><circle cx="10" cy="23" r="3"/><circle cx="22" cy="23" r="3"/></g></svg>
    </div>
    <svg class="scap"><use href="#cap-side"/></svg>
    <div class="sb sb3"><i class="hgrip"></i><b class="vt">GLSL</b><span class="hot"><b class="vt">OpenGL®</b></span>
      <svg class="i" viewBox="0 0 32 32"><path d="M10 3h20v18h-8l-3 5H10z" fill="#ddd"/><path d="M14 6h12v10H14z" fill="#00f"/><path d="M1 21l9-9v5h8v9h-8v5z" fill="#fff" stroke-width="1.500"/></svg>
      <svg class="i g" viewBox="0 0 32 32"><path d="M2 3h19v18H2zM4 21v4h10" fill="#aaa" stroke="#333"/><path d="M7 7h10v9H7z" fill="#666" stroke="#222"/><path d="M13 16h8v-4l9 9l-9 10v-6h-8z" fill="#aaa"/></svg>
    </div>
    <svg class="scap"><use href="#cap-side"/></svg>
  </aside>
</main>

<div class="status"><span>For Help, press F1</span><div><span>0 selected</span><span>Elev1: 2'-3</span><span>Text table</span><span># Off</span><span>Foot</span></div></div>

<div class="toolrow">
  <div class="tb b1"><i class="grip"></i>
    <svg class="i" viewBox="0 0 32 32"><path d="M3 5h24v20H3z" fill="#fff"/><path d="M2 2h27v6H2z" fill="#000080" stroke="none"/><path d="M4 5h3" stroke="#fff"/><path d="M11 8v17"/><path d="M13 30V19l4-3l4 3h10v11z" fill="#ffff90"/><path d="M15 26h14" stroke="#dd0" stroke-width="4" stroke-dasharray="2 2"/></svg>
    <span class="hot"><b>Layers</b></span><span class="hot"><b>Parts Picker</b></span><span class="hot"><b>Alerts</b></span><span class="hot"><b>Select</b></span><span class="hot"><b>Symbols</b></span>
    <svg class="i ar" viewBox="0 0 32 32"><path d="M2 15L15 2v8h15v11H15v8z"/></svg><b class="off">-Y</b>
    <svg class="i ar" viewBox="0 0 32 32"><path d="M16 2l13 13h-8v14H11V15H3z"/></svg><b class="off">+X</b>
    <svg class="i ar" viewBox="0 0 32 32"><path d="M30 15L17 2v8H2v11h15v8z"/></svg><b class="off">+Y</b>
    <svg class="i ar" viewBox="0 0 32 32"><path d="M16 30L2 16h9V2h11v14h8z"/></svg><b class="off">-X</b>
  </div>
  <svg class="cap"><use href="#cap"/></svg>
  <div class="tb b2"><i class="grip"></i>
    <svg class="i" viewBox="0 0 32 32"><path d="M6 9h8V5l9 9l-9 10v-5H6z" fill="#000" stroke="none"/></svg>
    <i class="field"></i>
  </div>
  <svg class="cap"><use href="#cap"/></svg>
  <div class="tb b3"><i class="grip"></i>
    <svg class="i" viewBox="0 0 32 32"><path d="M11 11q8-9 15-2q2 5-3 10"/><path d="M5 5v12h11z" fill="#000"/><path d="M5 26h22" stroke="#00f"/><path d="M3 23h6v6H3zM23 23h6v6h-6z" fill="#000" stroke="none"/></svg>
    <svg class="i g" viewBox="0 0 32 32"><path d="M2 3h6v6H2zM12 3h6v6h-6zM22 3h6v6h-6zM15 14h6v6h-6z" fill="#666" stroke="none"/><use href="#pointer"/></svg>
    <svg class="i" viewBox="0 0 32 32"><path d="M2 6h10M16 6h13M2 26h28M12 22h8M2 20v6M16 20v6M29 20v6" stroke="#222"/><path d="M4 14l3 6l5-9l6-8M18 14l4 6l5-10l4-7" stroke="#666" stroke-width="2.500"/><path d="M4 14l3 6l2-4M18 14l4 6l2-4" stroke="#111"/></svg>
    <svg class="i g" viewBox="0 0 32 32"><path d="M14 6v20M4 16h20M7 8l14 16M22 8L7 24" stroke="#666"/><use href="#pointer"/></svg>
    <svg class="i" viewBox="0 0 32 32"><path d="M2 2h28v28H2z" fill="#fff"/><path d="M6 3h18v3H6z" fill="#0ff" stroke="none"/><path d="M2 7h28M2 27h28M6 2v28M26 2v28"/><circle cx="16" cy="17" r="6"/><path d="M16 9v16M8 17h16" stroke-width="1"/><path d="M16 17v-6a6 6 0 0 1 6 6zM16 17v6a6 6 0 0 1-6-6z" fill="#000" stroke="none"/></svg>
    <span class="hot"><b>Lock On Target</b></span>
    <svg class="i" viewBox="0 0 32 32"><circle cx="17" cy="10" r="8.500" fill="#fff"/><path d="M23 17l7 9" stroke-width="4"/><path d="M13 9l9 10h-4v10H9V19H5z" fill="#fff" stroke-width="1.800"/></svg>
    <svg class="i" viewBox="0 0 32 32"><circle cx="17" cy="10" r="8.500" fill="#fff"/><path d="M23 17l7 9" stroke-width="4"/><path d="M9 9h8v11h5l-9 10l-9-10h5z" fill="#fff" stroke-width="1.800"/></svg>
    <svg class="i pu" viewBox="0 0 32 32"><path d="M16 3l11 13h-7v13h-8V16H5z"/></svg>
    <svg class="i pu" viewBox="0 0 32 32"><path d="M3 16L15 4v7h13v9H15v9z"/></svg>
    <svg class="i pu" viewBox="0 0 32 32"><path d="M4 4v13h14l-5-5q8-4 10 4q1 5-4 9l4 3q8-5 6-14q-5-12-20-6z"/></svg>
    <svg class="i pu" viewBox="0 0 32 32"><path d="M16 29L4 16h7V3h9v13h8z"/></svg>
    <svg class="i pu" viewBox="0 0 32 32"><path d="M29 16L17 4v7H3v9h14v9z"/></svg>
    <svg class="i pu" viewBox="0 0 32 32"><path d="M28 4v13H14l5-5q-8-4-10 4q-1 5 4 9l-4 3q-8-5-6-14q5-12 20-6z"/></svg>
    <svg class="i" viewBox="0 0 32 32"><path d="M14 4v26" stroke="#fff" stroke-width="5"/><path d="M14 6v26" stroke="#e00" stroke-width="5" stroke-dasharray="4 3"/><path d="M28 9H11q-8 3-7 8q1 4 5 5h9M28 15q0 6-6 8" stroke-width="3.500"/><path d="M17 15l10 7l-10 7zM14 0l5 6H9z" fill="#000" stroke="none"/></svg>
    <svg class="i" viewBox="0 0 32 32"><path d="M17 4v26" stroke="#fff" stroke-width="5"/><path d="M17 6v26" stroke="#e00" stroke-width="5" stroke-dasharray="4 3"/><path d="M4 9h17q8 3 7 8q-1 4-5 5h-9M4 15q0 6 6 8" stroke-width="3.500"/><path d="M15 15L5 22l10 7zM17 0l5 6H12z" fill="#000" stroke="none"/></svg>
    <svg class="i h" viewBox="0 0 32 32"><path class="rf" d="M14 3l7 10H7z"/><path d="M8 13h13v15H8zM12 18h5v5h-5z"/><path d="M22 28h7l-4-4h-3z" fill="#800000" stroke="none"/></svg>
    <svg class="i h" viewBox="0 0 32 32"><path class="rf" d="M8 4h16l6 9H2z"/><path d="M4 13h24v15H4zM19 17h6v4h-6z"/><path d="M7 17h6v11H7z" fill="#800000" stroke="none"/></svg>
    <svg class="i h" viewBox="0 0 32 32"><path class="rf" d="M18 3l7 10H11z"/><path d="M12 13h13v15H12zM16 18h5v5h-5z"/><path d="M11 28H3l4-4h4z" fill="#800000" stroke="none"/></svg>
    <svg class="i h" viewBox="0 0 32 32"><path class="rf" d="M8 4h16l6 9H2z"/><path d="M4 13h24v15H4zM7 17h6v4H7zM19 17h6v4h-6z"/></svg>
    <svg class="i" viewBox="0 0 32 32"><path d="M3 3h9l-3 3l5 5l-4 4l-4-5l-3 2zM29 3h-9l3 3l-5 5l4 4l4-5l3 2zM3 29h9l-3-3l5-5l-4-3l-4 4l-3-2zM29 29h-9l3-3l-5-5l4-3l4 4l3-2z" fill="#fff" stroke-width="1.700"/></svg>
    <svg class="i h" viewBox="0 0 32 32"><path d="M1 15L20 4l11 5l-14 7l13 6l-8 6z"/><path d="M14 7l9 5M8 12l9 4l-6 4M24 19l-7 5"/></svg>
    <span class="hot"><svg class="i h" viewBox="0 0 32 32"><path d="M4 5h25v22H4z"/><path d="M4 12h5M12 5v8M21 5v4M21 14v13M12 12h5"/></svg></span>
    <b class="off">Refresh Elements</b>
  </div>
  <svg class="cap"><use href="#cap"/></svg>
</div>
</body>
</html>
```
FILE: styles.css
```css
* { box-sizing: border-box; }
body { margin: 0; width: 1920px; height: 1032px; overflow: hidden; background: #535353; font: 12px "Open Sans", "Noto Sans", sans-serif; letter-spacing: -.25px; color: #000; display: flex; flex-direction: column; }
.defs { position: absolute; }
svg { display: block; }
i { font-style: normal; }
b { font-weight: 400; white-space: nowrap; }

.titlebar { height: 23px; flex: none; display: flex; align-items: center; background: linear-gradient(90deg, #faf2ee, #f5f3ee 50%, #faf1ef); padding-left: 2px; }
.app { width: 16px; height: 16px; margin-right: 6px; }
.title { flex: 1; white-space: nowrap; letter-spacing: -.305px; }
.winctl { width: 110px; height: 23px; margin-right: 16px; }

.menubar { height: 23px; flex: none; display: grid; grid-template-columns: 29px 33px 35px 45px 46px 43px 53px 72px 70px 76px 56px 68px 46px 44px 49px 91px 65px 57px 40px 59px 798px 42px; align-items: center; color: #fff; letter-spacing: -.3px; }
.menubar span { white-space: nowrap; line-height: 20px; }
.docicon { width: 17px; height: 17px; margin-left: 2px; }
.mdi { width: 42px; height: 16px; margin-top: 6px; }

.toolrow { height: 46px; flex: none; display: flex; }
.tb { height: 45px; display: grid; align-items: center; justify-items: center; background: linear-gradient(#cfd2d7, #c5c9cf 45%, #9199a5); border-radius: 2px 0 0 2px; border-top: 1px solid #d6d9dd; font-size: 11.600px; letter-spacing: -.33px; }
.cap { width: 19px; height: 45px; flex: none; background: linear-gradient(#a4a9b3, #7b818c 45%, #4c525d); border-radius: 0 3px 2px 0; }
.grip { width: 3px; height: 27px; justify-self: start; margin-left: 4px; background: repeating-linear-gradient(#2b2b2b 0 2px, #fff 2px 3px, transparent 3px 4px); }
.i { width: 32px; height: 32px; fill: none; stroke: #000; stroke-width: 2; }
.g { stroke: #555; }
.m { fill: #c9ccd1; filter: drop-shadow(1px 1px 0 #999); }
.ar { fill: #666; stroke: #555; stroke-width: 1; filter: drop-shadow(1px 1px 0 #888); }
.pu { fill: #800080; stroke: #f0f; stroke-width: 1; filter: drop-shadow(1px 1px 0 #888); }
.h { fill: #fff; stroke: #000080; }
.rf { fill: #f55; stroke-dasharray: 3 1; }
.n3 { font: bold 17px "Liberation Sans", sans-serif; fill: #000; stroke: none; }
.off { color: #8a8c90; }
.hot { width: 100%; height: 41px; display: flex; align-items: center; justify-content: center; border: 1px solid #a8aab0; background: linear-gradient(#f9cfa4, #fbc483 30%, #feae50 31%, #fec66a 60%, #ffeb9d); border-bottom-color: #fff3d0; }
.field { width: 60px; height: 15px; background: #fff; }

.r1a { width: 575px; grid-template-columns: 12px 43px 44px 43px 44px 44px 45px 43px 44px 105px 104px; }
.r1b { width: 1190px; grid-template-columns: 12px 42px 44px 44px 44px 45px 42px 45px 104px 45px 44px 102px 44px 219px 56px 45px 44px 71px 44px 50px; }
.r2 { width: 1871px; grid-template-columns: 10px 68px 44px 44px 43px 44px 43px 44px 44px 44px 44px 99px 87px 44px 44px 70px 43px 45px 45px 44px 43px 44px 44px 44px 44px 113px 43px 52px 43px 44px 45px 43px 106px 44px 44px 78px; }
.r3a { width: 552px; grid-template-columns: 10px 84px 44px 44px 66px 78px 92px 131px; }
.r3b { width: 717px; grid-template-columns: 10px 132px 44px 44px 44px 44px 44px 44px 43px 44px 45px 44px 44px 45px 42px; }
.r3c { width: 367px; grid-template-columns: 10px 44px 88px 90px 44px 45px 45px; }
.r3d { width: 198px; grid-template-columns: 10px 44px 44px 95px; }
.b1 { width: 538px; grid-template-columns: 10px 44px 40px 67px 38px 39px 51px 44px 15px 44px 19px 45px 18px 45px 14px; }
.b2 { width: 123px; grid-template-columns: 10px 41px 72px; }
.b3 { width: 1165px; grid-template-columns: 10px 44px 44px 43px 44px 45px 86px 44px 44px 44px 44px 44px 44px 45px 44px 44px 44px 44px 44px 44px 44px 43px 45px 44px 97px; }

.r1a b { letter-spacing: -.45px; }

.work { height: 783px; flex: none; display: flex; }
.layers { width: 322px; display: flex; flex-direction: column; }
.ltitle { width: 318px; height: 20px; background: #9d9f9e; border-top: 1px solid #ddd; color: #333; display: flex; justify-content: space-between; align-items: center; padding: 0 0 0 4px; line-height: 17px; }
.ltitle svg { width: 36px; height: 14px; }
.lbox { width: 318px; height: 739px; background: #fff; border: solid #d9d9d9; border-width: 3px 3px 1px; }
.ltools { height: 44px; display: grid; grid-template-columns: 44px 44px 8px 44px 44px 8px 44px 44px 8px 24px; align-items: center; justify-items: center; padding-left: 2px; overflow: hidden; background: linear-gradient(#cfd2d7, #c3c7cd 40%, #9299a4); }
.ltools .i:last-child { justify-self: start; margin-left: 4px; }
.sep { width: 2px; height: 26px; background: linear-gradient(90deg, #777 50%, #fff 50%); }
.lgrid { display: grid; grid-template-columns: 100px 20px 20px 20px 20px 75px; height: 17px; align-items: center; white-space: nowrap; }
.lgrid span { line-height: 17px; }
.lhead { height: 19px; grid-template-columns: 100px 20px 20px 20px 20px 75px 1fr; background: linear-gradient(#fff, #ebebeb); border-bottom: 1px solid #d5d5d5; }
.lhead span { border-right: 1px solid #bbb; padding-left: 5px; line-height: 18px; }
.lhead span:last-child { border: 0; }
.lbody { position: relative; }
.tree { position: absolute; left: -3px; top: 0; width: 36px; height: 240px; }
.l0 { padding-left: 17px; }
.l1 { margin-left: 30px; padding-left: 2px; }
.lgrid > span:last-child { padding-left: 3px; }
.e { width: 16px; height: 12px; margin-top: -1px; }
.mg { width: 16px; height: 16px; }
.sw { width: 18px; height: 13px; background: #000; border: solid #777; border-width: 0 1px 1px 0; margin: -1px 0 0 1px; }
.blue { background: #00f; }
.red { background: #f00; }
.sel { background: linear-gradient(90deg, transparent 30px, #0078d7 30px); width: 255px; color: #fff; }
.ltabs { height: 24px; display: grid; grid-template-columns: 32px 27px 27px 27px 27px 27px 27px 27px 27px 27px 30px; color: #fff; padding-left: 3px; align-items: start; line-height: 24px; }
.ltabs .on { width: 24px; height: 20px; background: linear-gradient(#c5cad2, #fff); color: #000; border-radius: 0 0 4px 4px; padding-left: 3px; white-space: nowrap; overflow: hidden; border: 1px solid #8ab; border-top: 0; line-height: 24px; letter-spacing: -.5px; }

.doc { width: 1550px; display: flex; flex-direction: column; border-left: 1px solid #aaa; }
.dtabs { height: 20px; display: flex; align-items: flex-end; color: #fff; line-height: 17px; }
.start { width: 70px; padding-left: 7px; white-space: nowrap; }
.active { width: 173px; height: 17px; background: linear-gradient(#fff, #dfe5ec); color: #000; font-weight: 700; font-size: 11.500px; letter-spacing: -.62px; padding-left: 3px; border-radius: 3px 3px 0 0; display: flex; align-items: center; white-space: nowrap; justify-content: space-between; padding-right: 5px; }
.active svg { width: 8px; height: 8px; }
.dnav { width: 26px; height: 12px; margin: 0 8px 4px auto; }
.frame { height: 763px; border: solid #f2f2f2; border-width: 2px 5px 5px 4px; background: #5b5b5b; padding: 3px 0 0 2px; }
.view { height: 733px; display: grid; grid-template-columns: 1519px 1fr; grid-template-rows: 716px 17px; background: #efefef; }
.canvas { position: relative; overflow: hidden; background: #595959; }
.vscroll, .hscroll { background: #f0f0f0; display: flex; }
.vscroll i { width: 2px; height: 17px; background: #8a8a8a; margin: 350px 0 0 8px; }
.hscroll { grid-column: 1 / 3; }
.hscroll i { width: 17px; height: 2px; background: #8a8a8a; margin: 8px 0 0 302px; }
.sheets { height: 20px; background: linear-gradient(#444, #717171 5px, #7a7a7a); display: flex; align-items: center; line-height: 17px; }
.sheets svg { width: 64px; height: 18px; }
.sheets span { height: 17px; }
.s1 { width: 57px; margin-left: 4px; padding-left: 7px; background: #fff; color: #000; font-weight: 700; letter-spacing: -.7px; clip-path: polygon(0 0, 100% 0, 45px 100%, 0 100%); }
.s2 { width: 58px; margin-left: -7px; padding-left: 9px; background: linear-gradient(#d5dae2, #b4bcc8); clip-path: polygon(10px 0, 100% 0, 44px 100%, 0 100%); }

.riser { position: absolute; left: 384px; top: 30px; width: 752px; border-collapse: collapse; background: #fff; font: bold 20px "Liberation Sans", Arial, sans-serif; border: 1.500px solid #000; border-top: 0; table-layout: fixed; letter-spacing: -.04px; }
.riser caption { height: 50px; background: #fff; border: 1.500px solid #000; border-bottom-width: 2px; font-size: 27px; line-height: 49px; letter-spacing: .5px; text-align: center; }
.riser td, .riser th { height: 30.350px; padding: 0 0 0 11px; text-align: left; line-height: 24px; white-space: nowrap; }
.riser .c1 { width: 505px; }
.riser td:first-child { padding-left: 33px; }
.origin { position: absolute; left: 361px; top: 1px; width: 130px; height: 60px; }
.plan { position: absolute; left: 1151px; top: 151px; width: 368px; height: 500px; }
.cadtext { font: bold 57px "Liberation Sans", Arial, sans-serif; fill: #000; }
.tag path { fill: #ff0; stroke: #000; stroke-width: 3; }
.tag text { font: bold 58px "Liberation Sans", Arial, sans-serif; text-anchor: middle; fill: #000; }

.side { width: 48px; }
.sb { display: grid; align-items: center; justify-items: center; background: linear-gradient(90deg, #cfd2d7, #c3c7cd 45%, #9199a5); border-left: 1px solid #999; }
.sb1 { height: 212px; grid-template-rows: 10px 74px 42px 42px 44px; }
.sb2 { height: 320px; grid-template-rows: 10px 42px 42px 7px 44px 42px 6px 44px 38px 45px; }
.sb3 { height: 201px; grid-template-rows: 10px 41px 64px 42px 44px; }
.hgrip { width: 31px; height: 3px; background: repeating-linear-gradient(90deg, #2b2b2b 0 2px, #fff 2px 3px, transparent 3px 4px); }
.vt { writing-mode: vertical-rl; text-orientation: sideways; letter-spacing: -.35px; line-height: 18px; }
.sb3 .vt { letter-spacing: -.5px; }
.hr { width: 28px; height: 1px; background: #fff; }
.sb3 .hot { width: 43px; height: 63px; }
.scap { width: 48px; height: 21px; background: linear-gradient(90deg, #4c525d, #7b818c 50%, #a9aeb8); }

.status { height: 19px; flex: none; background: linear-gradient(#3b3f4b 0 8px, #2f2f2f 8px); color: #fff; display: flex; justify-content: space-between; line-height: 22px; padding-left: 4px; letter-spacing: -.35px; }
.status div { display: grid; grid-template-columns: 63px 63px 56px 34px 77px; }
.status div span { border-left: 1px solid #666; padding-left: 3px; white-space: nowrap; }
```
